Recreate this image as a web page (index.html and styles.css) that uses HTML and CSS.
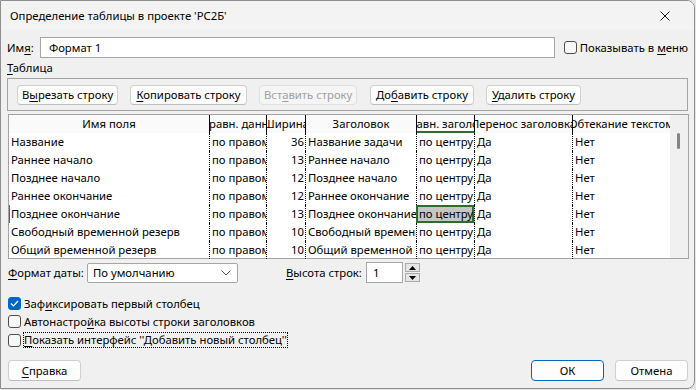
FILE: index.html
```html
<!DOCTYPE html>
<html lang="ru">
<head>
  <meta charset="UTF-8">
  <title>Определение таблицы</title>
  <link rel="stylesheet" href="styles.css">
</head>
<body>
  <div class="dialog">
    <div class="titlebar">
      <span>Определение таблицы в проекте 'РС2Б'</span>
      <span class="close">
        <svg width="10" height="10" viewBox="0 0 10 10"><path d="M0.5 0.5 L9.5 9.5 M9.5 0.5 L0.5 9.5" stroke="#1a1a1a" stroke-width="1"/></svg>
      </span>
    </div>

    <div class="content">
      <!-- Имя -->
      <div class="name-row">
        <span class="name-label">Им<u>я</u>:</span>
        <div class="textbox name-input">Формат 1</div>
        <span class="check"></span>
        <span class="check-label">Показывать в <u>м</u>еню</span>
      </div>

      <div class="group-label"><u>Т</u>аблица</div>
      <div class="group">
        <button class="button">В<u>ы</u>резать строку</button>
        <button class="button"><u>К</u>опировать строку</button>
        <button class="button disabled">Вст<u>а</u>вить строку</button>
        <button class="button">До<u>б</u>авить строку</button>
        <button class="button"><u>У</u>далить строку</button>
      </div>

      <!-- Таблица полей -->
      <div class="grid">
        <div class="grid-main">
          <div class="row head">
            <div class="cell"><span>Имя поля</span></div>
            <div class="cell"><span>Выравн. данных</span></div>
            <div class="cell"><span>Ширина</span></div>
            <div class="cell"><span>Заголовок</span></div>
            <div class="cell active-col"><span>Выравн. заголовка</span></div>
            <div class="cell"><span>Перенос заголовка</span></div>
            <div class="cell"><span>Обтекание текстом</span></div>
          </div>
          <div id="gridBody"></div>
        </div>
        <div class="scroll">
          <div class="thumb"></div>
        </div>
      </div>

      <div class="options-row">
        <span class="opt-label"><u>Ф</u>ормат даты:</span>
        <div class="select">
          <span>По умолчанию</span>
          <svg width="10" height="6" viewBox="0 0 10 6"><path d="M0.5 0.5 L5 5 L9.5 0.5" fill="none" stroke="#555" stroke-width="1"/></svg>
        </div>
        <span class="opt-label height-label"><u>В</u>ысота строк:</span>
        <div class="textbox number">1</div>
        <div class="spinner">
          <div class="spin"><svg width="7" height="4" viewBox="0 0 7 4"><path d="M3.5 0 L7 4 L0 4 Z" fill="#000"/></svg></div>
          <div class="spin"><svg width="7" height="4" viewBox="0 0 7 4"><path d="M0 0 L7 0 L3.5 4 Z" fill="#000"/></svg></div>
        </div>
      </div>

      <div class="checks">
        <div class="check-row">
          <span class="check checked">
            <svg width="9" height="7" viewBox="0 0 9 7"><path d="M1 3.5 L3.5 6 L8 1" fill="none" stroke="#fff" stroke-width="1.2"/></svg>
          </span>
          <span class="check-label">Заф<u>и</u>ксировать первый столбец</span>
        </div>
        <div class="check-row">
          <span class="check"></span>
          <span class="check-label">Автонастро<u>й</u>ка высоты строки заголовков</span>
        </div>
        <div class="check-row">
          <span class="check"></span>
          <span class="check-label focus"><u>П</u>оказать интерфейс ''Добавить новый столбец''</span>
        </div>
      </div>
    </div>

    <div class="footer">
      <button class="button wide"><u>С</u>правка</button>
      <div class="footer-right">
        <button class="button wide primary">ОК</button>
        <button class="button wide">Отмена</button>
      </div>
    </div>
  </div>

  <script>
    // строки таблицы
    const rows = [
      ['Название', '36', 'Название задачи'],
      ['Раннее начало', '13', 'Раннее начало'],
      ['Позднее начало', '12', 'Позднее начало'],
      ['Раннее окончание', '12', 'Раннее окончание'],
      ['Позднее окончание', '13', 'Позднее окончание'],
      ['Свободный временной резерв', '10', 'Свободный временной резерв'],
      ['Общий временной резерв', '10', 'Общий временной резерв']
    ];
    const gridBody = document.getElementById('gridBody');
    rows.forEach((r, i) => {
      const sel = i === 4 ? ' selected' : '';
      const mark = i === 4 ? ' marked' : '';
      gridBody.innerHTML += `<div class="row">
        <div class="cell${mark}">${r[0]}</div>
        <div class="cell">по правому краю</div>
        <div class="cell num">${r[1]}</div>
        <div class="cell">${r[2]}</div>
        <div class="cell${sel}">по центру</div>
        <div class="cell">Да</div>
        <div class="cell">Нет</div>
      </div>`;
    });
  </script>
</body>
</html>
```

FILE: styles.css
```css
* {
  box-sizing: border-box;
}
body {
  margin: 0;
  background: #e6e6e6;
  font-family: "Noto Sans", sans-serif;
  font-size: 11.3px;
  color: #000;
}
u {
  text-decoration-thickness: 1px;
  text-underline-offset: 2px;
}
.dialog {
  width: 695px;
  height: 389px;
  background: #f0f0f0;
  border: 1px solid #8f8f8f;
  border-radius: 0 8px 8px 0;
  display: flex;
  flex-direction: column;
  overflow: hidden;
}
.titlebar {
  height: 29px;
  background: #f3f3f3;
  display: flex;
  align-items: center;
  justify-content: space-between;
  padding-left: 9px;
}
.close {
  width: 30px;
  display: flex;
  align-items: center;
  margin-right: 4px;
}
.content {
  padding: 0 6px;
}

/* Имя */
.name-row {
  display: flex;
  align-items: center;
  margin-top: 7px;
  height: 21px;
}
.name-label {
  width: 33px;
}
.textbox {
  background: #fff;
  border: 1px solid #a6a6a6;
  height: 21px;
  padding-left: 8px;
  display: flex;
  align-items: center;
}
.name-input {
  width: 516px;
  margin-right: 9px;
}
.check {
  width: 13px;
  height: 13px;
  border: 1px solid #4d4d4d;
  border-radius: 3px;
  background: #f7f7f7;
  display: flex;
  align-items: center;
  justify-content: center;
  flex-shrink: 0;
}
.check.checked {
  background: #0067c0;
  border-color: #0067c0;
}
.check-label {
  margin-left: 3px;
  white-space: nowrap;
}

/* Таблица: кнопки */
.group-label {
  margin-top: 3px;
  line-height: 14px;
}
.group {
  margin-top: 3px;
  height: 33px;
  width: 681px;
  border: 1px solid #a3a3a3;
  display: flex;
  align-items: center;
  padding-left: 9px;
}
.button {
  font-family: inherit;
  font-size: inherit;
  height: 20px;
  padding: 0 4px;
  margin-right: 12px;
  background: #fdfdfd;
  border: 1px solid #d0d0d0;
  border-bottom-color: #bdbdbd;
  border-radius: 4px;
  color: #000;
  white-space: nowrap;
}
.button.disabled {
  color: #a0a0a0;
  background: #f5f5f5;
  border-color: #e0e0e0;
}
.group .button:nth-child(1) { width: 101px; }
.group .button:nth-child(2) { width: 117px; }
.group .button:nth-child(3) { width: 98px; margin-right: 13px; }
.group .button:nth-child(4) { width: 104px; }
.group .button:nth-child(5) { width: 95px; }

/* Сетка полей */
.grid {
  margin-top: 3px;
  margin-left: 1px;
  width: 681px;
  height: 145px;
  border: 1px solid #a3a3a3;
  display: flex;
  background: #fff;
}
.grid-main {
  width: 661px;
}
.row {
  display: grid;
  grid-template-columns: 201px 57px 39px 111px 58px 98px 97px;
  height: 18px;
}
.row.head {
  height: 18px;
  background: #fafafa;
}
.cell {
  border-right: 1px dotted #000;
  overflow: hidden;
  white-space: nowrap;
  padding-left: 2px;
  line-height: 18px;
}
.cell:last-child {
  border-right: none;
}
.cell.marked {
  box-shadow: inset 1px 0 0 #3b7d3b;
}
.head .cell {
  border-right: 1px solid #000;
  display: flex;
  justify-content: center;
  padding-left: 0;
}
.head .cell:last-child {
  border-right: none;
}
.head .cell span {
  flex-shrink: 0;
}
.head .active-col {
  border-bottom: 2px solid #2e6b2e;
}
.cell.num {
  text-align: right;
  padding-right: 1px;
}
.cell.selected {
  background: #c6c6c6;
  box-shadow: inset 0 0 0 2px #2e6b2e;
  margin-left: -1px;
  padding-left: 3px;
}
.scroll {
  width: 18px;
  background: #f0f0f0;
  padding: 18px 0 0 7px;
}
.thumb {
  width: 3px;
  height: 16px;
  border-radius: 2px;
  background: #858585;
}

/* Формат даты / высота строк */
.options-row {
  display: flex;
  align-items: center;
  margin-top: 3px;
  height: 21px;
}
.opt-label {
  width: 80px;
  padding-left: 1px;
  white-space: nowrap;
}
.select {
  width: 151px;
  height: 20px;
  background: #fff;
  border: 1px solid #a6a6a6;
  border-radius: 2px;
  display: flex;
  align-items: center;
  justify-content: space-between;
  padding: 0 6px 0 5px;
}
.height-label {
  width: auto;
  margin-left: 47px;
  margin-right: 4px;
}
.number {
  width: 37px;
  padding-left: 6px;
}
.spinner {
  margin-left: 2px;
  display: flex;
  flex-direction: column;
  gap: 1px;
}
.spin {
  width: 15px;
  height: 9px;
  background: #e6e6e6;
  border: 1px solid #ababab;
  display: flex;
  align-items: center;
  justify-content: center;
}

/* Флажки */
.checks {
  margin-top: 11px;
}
.check-row {
  display: flex;
  align-items: center;
  height: 18.5px;
  padding-left: 1px;
}
.check-label.focus {
  outline: 1px dotted #000;
  line-height: 14px;
}

/* Кнопки внизу */
.footer {
  margin-top: auto;
  padding: 0 6px 7px 7px;
  display: flex;
  justify-content: space-between;
}
.footer .button {
  margin-right: 0;
}
.button.wide {
  width: 73px;
  height: 21px;
}
.footer-right {
  display: flex;
  gap: 11px;
}
.button.primary {
  border-color: #0067c0;
}
```
